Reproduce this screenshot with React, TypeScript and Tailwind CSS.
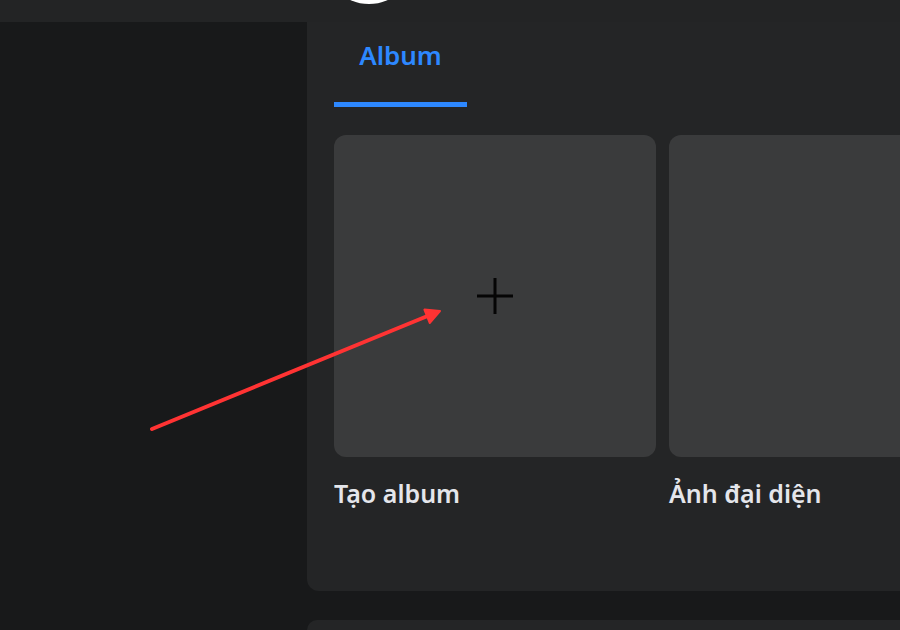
const albums = [
  { id: 'create', label: 'Tạo album', isCreate: true },
  { id: 'avatar', label: 'Ảnh đại diện', isCreate: false }
]

function PlusIcon() {
  return (
    <svg width="40" height="40" viewBox="0 0 40 40" fill="none">
      <path d="M20 2v36M2 20h36" stroke="#050505" strokeWidth="3" />
    </svg>
  )
}

function AnnotationArrow() {
  return (
    <svg className="pointer-events-none absolute inset-0" width="900" height="630" viewBox="0 0 900 630">
      <line x1="152" y1="429" x2="430" y2="315" stroke="#ff3333" strokeWidth="4" strokeLinecap="round" />
      <polygon points="440,311 429.7,323 424.4,309.6" fill="#ff3333" stroke="#ff3333" strokeWidth="2" strokeLinejoin="round" />
    </svg>
  )
}

export default function App() {
  return (
    <div
      className="relative flex h-[630px] w-[900px] flex-col overflow-hidden bg-[#18191a]"
      style={{ fontFamily: '"Segoe UI", "Noto Sans", sans-serif' }}
    >
      {/* top bar, avatar peeking from above */}
      <div className="relative h-[22px] shrink-0 bg-[#232425]">
        <div className="absolute left-[323px] top-[-88px] h-[92px] w-[92px] rounded-full bg-white" />
      </div>

      <div className="flex flex-1">
        <div className="w-[307px] shrink-0" />

        <div className="flex flex-1 flex-col gap-[29px]">
          {/* album panel */}
          <div className="h-[569px] shrink-0 rounded-bl-xl bg-[#242526] pl-[27px]">
            <div className="flex w-[133px] flex-col pt-[17px]">
              <div className="text-center text-[26px] leading-[32px] font-semibold text-[#2d88ff]">
                Album
              </div>
              <div className="mt-[31px] h-[5px] bg-[#2d88ff]" />
            </div>

            <div className="mt-[28px] flex gap-[13px] overflow-hidden">
              {albums.map((a) => (
                <div key={a.id} className="flex w-[322px] shrink-0 flex-col">
                  <div className="flex h-[322px] items-center justify-center rounded-xl bg-[#3a3b3c]">
                    {a.isCreate && <PlusIcon />}
                  </div>
                  <div className="mt-[20px] text-[25px] leading-[32px] font-semibold text-[#e4e6eb]">
                    {a.label}
                  </div>
                </div>
              ))}
            </div>
          </div>

          {/* next panel */}
          <div className="flex-1 rounded-tl-xl bg-[#242526]" />
        </div>
      </div>

      <AnnotationArrow />
    </div>
  )
}
